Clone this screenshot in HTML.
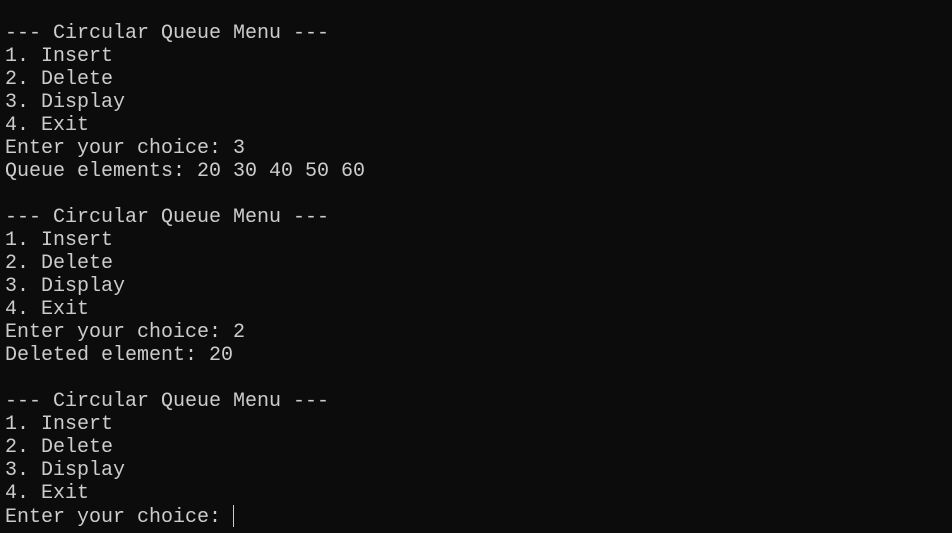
<!DOCTYPE html>
<html><head><style>
html,body{margin:0;padding:0;background:#0c0c0c;width:952px;height:533px;overflow:hidden}
pre{margin:0;position:absolute;left:5px;top:22px;font-family:"Liberation Mono",monospace;font-size:20px;line-height:23px;color:#cccccc;white-space:pre}
.cur{display:inline-block;width:1px;height:22px;background:#cccccc;vertical-align:-5px;margin-left:0px}
</style></head><body>
<pre>--- Circular Queue Menu ---
1. Insert
2. Delete
3. Display
4. Exit
Enter your choice: 3
Queue elements: 20 30 40 50 60

--- Circular Queue Menu ---
1. Insert
2. Delete
3. Display
4. Exit
Enter your choice: 2
Deleted element: 20

--- Circular Queue Menu ---
1. Insert
2. Delete
3. Display
4. Exit
Enter your choice: <span class="cur"></span></pre>
</body></html>
